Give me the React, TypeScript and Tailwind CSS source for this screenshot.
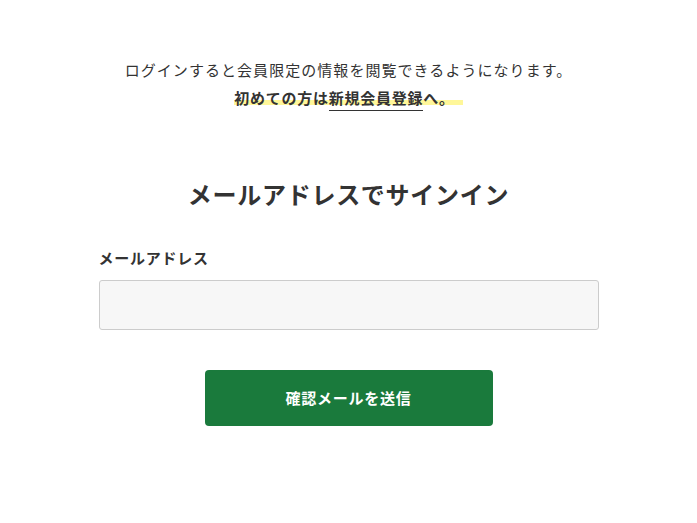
export default function App() {
  return (
    <main
      className="min-h-screen bg-white text-[#333]"
      style={{ fontFamily: '"Noto Sans CJK JP", "Noto Sans", sans-serif' }}
    >
      <section className="mx-auto w-[500px] pt-[56px]">
        <div className="text-center text-[15px] leading-[28px]">
          <p className="tracking-[0.07em]">ログインすると会員限定の情報を閲覧できるようになります。</p>
          <p className="font-bold tracking-[0.05em]">
            <span className="bg-[linear-gradient(transparent_62%,#fff799_62%,#fff799_85%,transparent_85%)] pr-[8px]">
              初めての方は
              <a href="#" className="border-b border-[#333] pb-[2px]">
                新規会員登録
              </a>
              へ。
            </span>
          </p>
        </div>

        <h1 className="mt-[64px] text-center text-[24px] font-bold leading-[36px] tracking-[0.03em]">
          メールアドレスでサインイン
        </h1>

        <label className="mt-[34px] block text-[15px] font-bold leading-[24px] tracking-[0.05em]">
          メールアドレス
        </label>
        <input
          type="email"
          className="mt-[10px] block h-[50px] w-full rounded-[3px] border border-[#ccc] bg-[#f7f7f7] px-3 outline-none"
        />

        <div className="mt-[40px] flex justify-center">
          <button className="h-[56px] w-[288px] rounded-[4px] bg-[#1a7a3c] text-[15px] font-bold tracking-[0.05em] text-white">
            確認メールを送信
          </button>
        </div>
      </section>
    </main>
  );
}
